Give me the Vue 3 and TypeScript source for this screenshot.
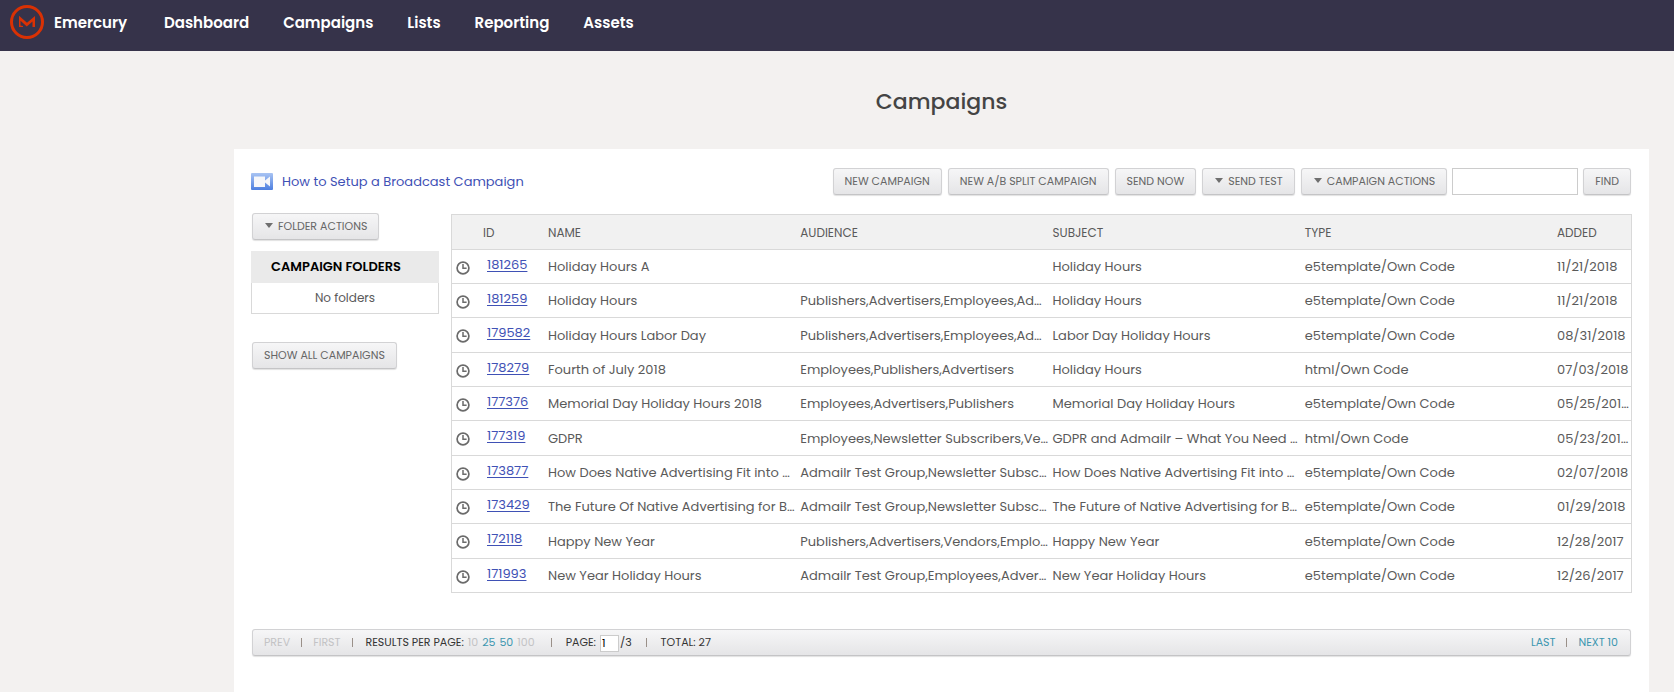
<script setup lang="ts">
import { ref } from 'vue'

interface Campaign {
  id: string
  name: string
  audience: string
  subject: string
  type: string
  added: string
}

const navItems: string[] = ['Dashboard', 'Campaigns', 'Lists', 'Reporting', 'Assets']

const search = ref('')
const page = ref('1')

const campaigns: Campaign[] = [
  { id: '181265', name: 'Holiday Hours A', audience: '', subject: 'Holiday Hours', type: 'e5template/Own Code', added: '11/21/2018' },
  { id: '181259', name: 'Holiday Hours', audience: 'Publishers,Advertisers,Employees,Ad…', subject: 'Holiday Hours', type: 'e5template/Own Code', added: '11/21/2018' },
  { id: '179582', name: 'Holiday Hours Labor Day', audience: 'Publishers,Advertisers,Employees,Ad…', subject: 'Labor Day Holiday Hours', type: 'e5template/Own Code', added: '08/31/2018' },
  { id: '178279', name: 'Fourth of July 2018', audience: 'Employees,Publishers,Advertisers', subject: 'Holiday Hours', type: 'html/Own Code', added: '07/03/2018' },
  { id: '177376', name: 'Memorial Day Holiday Hours 2018', audience: 'Employees,Advertisers,Publishers', subject: 'Memorial Day Holiday Hours', type: 'e5template/Own Code', added: '05/25/201…' },
  { id: '177319', name: 'GDPR', audience: 'Employees,Newsletter Subscribers,Ve…', subject: 'GDPR and Admailr – What You Need …', type: 'html/Own Code', added: '05/23/201…' },
  { id: '173877', name: 'How Does Native Advertising Fit into …', audience: 'Admailr Test Group,Newsletter Subsc…', subject: 'How Does Native Advertising Fit into …', type: 'e5template/Own Code', added: '02/07/2018' },
  { id: '173429', name: 'The Future Of Native Advertising for B…', audience: 'Admailr Test Group,Newsletter Subsc…', subject: 'The Future of Native Advertising for B…', type: 'e5template/Own Code', added: '01/29/2018' },
  { id: '172118', name: 'Happy New Year', audience: 'Publishers,Advertisers,Vendors,Emplo…', subject: 'Happy New Year', type: 'e5template/Own Code', added: '12/28/2017' },
  { id: '171993', name: 'New Year Holiday Hours', audience: 'Admailr Test Group,Employees,Adver…', subject: 'New Year Holiday Hours', type: 'e5template/Own Code', added: '12/26/2017' },
]
</script>

<template>
  <div class="page">
    <header class="topbar">
      <a class="brand" href="#">
        <svg class="brand-logo" viewBox="0 0 34 34" aria-hidden="true">
          <circle cx="17" cy="17" r="15.5" fill="none" stroke="#d93104" stroke-width="3" />
          <path d="M9 10.700l8 7 8-6.700v11h-2.500v-5.500L16.800 21.500l-6.300-5.700v4.700l2.500.500v1H9z" fill="#d93104" />
        </svg>
        <span>Emercury</span>
      </a>
      <nav class="nav">
        <a v-for="item in navItems" :key="item" href="#">{{ item }}</a>
      </nav>
    </header>

    <main class="main">
      <h1>Campaigns</h1>
      <section class="panel">
        <div class="toolbar">
          <a class="howto" href="#">
            <svg class="camera" viewBox="0 0 22 17" aria-hidden="true">
              <defs>
                <linearGradient id="cameraFill" x1="0" y1="0" x2="0" y2="1">
                  <stop offset="0" stop-color="#a9c4f3" />
                  <stop offset="1" stop-color="#4d7fe0" />
                </linearGradient>
              </defs>
              <rect width="22" height="17" rx="1" fill="url(#cameraFill)" />
              <path d="M3 3.500h11v4l5-4v10l-5-4v4.500H3z" fill="#f6f7fa" />
            </svg>
            <span>How to Setup a Broadcast Campaign</span>
          </a>
          <form class="actions" @submit.prevent>
            <button type="button" class="btn">NEW CAMPAIGN</button>
            <button type="button" class="btn">NEW A/B SPLIT CAMPAIGN</button>
            <button type="button" class="btn">SEND NOW</button>
            <button type="button" class="btn"><i class="caret"></i>SEND TEST</button>
            <button type="button" class="btn"><i class="caret"></i>CAMPAIGN ACTIONS</button>
            <input v-model="search" class="search" type="text" aria-label="Find campaigns" />
            <button type="submit" class="btn">FIND</button>
          </form>
        </div>

        <div class="content">
          <aside class="side">
            <button type="button" class="btn"><i class="caret"></i>FOLDER ACTIONS</button>
            <div class="folders">
              <h2>CAMPAIGN FOLDERS</h2>
              <p>No folders</p>
            </div>
            <button type="button" class="btn">SHOW ALL CAMPAIGNS</button>
          </aside>

          <table class="grid">
            <colgroup>
              <col class="c-icon" />
              <col class="c-id" />
              <col />
              <col />
              <col />
              <col />
              <col class="c-added" />
            </colgroup>
            <thead>
              <tr>
                <th></th>
                <th class="h-id">ID</th>
                <th>NAME</th>
                <th>AUDIENCE</th>
                <th>SUBJECT</th>
                <th>TYPE</th>
                <th>ADDED</th>
              </tr>
            </thead>
            <tbody>
              <tr v-for="c in campaigns" :key="c.id">
                <td class="icon">
                  <svg viewBox="0 0 14 14" aria-hidden="true">
                    <circle cx="7" cy="7" r="5.900" fill="none" stroke="#6b6b6b" stroke-width="1.700" />
                    <path d="M7 3v4.300h3.600" fill="none" stroke="#6b6b6b" stroke-width="1.500" />
                  </svg>
                </td>
                <td class="id"><a href="#">{{ c.id }}</a></td>
                <td>{{ c.name }}</td>
                <td>{{ c.audience }}</td>
                <td>{{ c.subject }}</td>
                <td>{{ c.type }}</td>
                <td>{{ c.added }}</td>
              </tr>
            </tbody>
          </table>
        </div>

        <div class="pager">
          <div class="pager-group">
            <span class="off">PREV</span>
            <i class="bar"></i>
            <span class="off">FIRST</span>
            <i class="bar"></i>
            <span class="sizes">
              <span>RESULTS PER PAGE:</span>
              <span class="off">10</span>
              <a href="#">25</a>
              <a href="#">50</a>
              <span class="off">100</span>
            </span>
            <i class="bar wide"></i>
            <label class="page-no">PAGE: <input v-model="page" type="text" />/3</label>
            <i class="bar wide"></i>
            <span>TOTAL: 27</span>
          </div>
          <div class="pager-group">
            <a href="#">LAST</a>
            <i class="bar"></i>
            <a href="#">NEXT 10</a>
          </div>
        </div>
      </section>
    </main>
  </div>
</template>

<style>
body {
  background: #f3f1f0;
}
</style>

<style scoped>
.page {
  min-height: 100vh;
  display: flex;
  flex-direction: column;
  font-family: Poppins, Inter, "Open Sans", sans-serif;
  font-size: 13px;
  color: #5a5a5a;
}
* {
  box-sizing: border-box;
}
.topbar {
  display: flex;
  align-items: center;
  height: 51px;
  padding: 0 10px 7px;
  background: #36334a;
}
a {
  text-decoration: none;
}
.brand,
.nav a {
  color: #fff;
  font-weight: 600;
}
.brand {
  display: flex;
  align-items: center;
  gap: 10px;
  width: 154px;
  font-size: 15px;
}
.brand-logo {
  width: 34px;
  height: 34px;
}
.nav {
  display: flex;
  gap: 34px;
  padding-top: 1px;
  font-size: 15px;
}
.main {
  flex: 1;
  display: flex;
  flex-direction: column;
  margin: 0 25px 0 234px;
}
h1 {
  margin: 0;
  padding: 34px 0 30px;
  text-align: center;
  font-size: 22px;
  line-height: 34px;
  font-weight: 500;
  color: #444;
}
.panel {
  flex: 1;
  padding: 19px 17px 36px;
  background: #fff;
}
.toolbar {
  display: flex;
  justify-content: space-between;
  align-items: center;
  margin-right: 1px;
}
.howto {
  display: flex;
  align-items: center;
  gap: 9px;
  color: #3f51b5;
}
.camera {
  width: 22px;
  height: 17px;
}
.actions {
  display: flex;
  align-items: center;
  gap: 6px;
}
.btn {
  display: inline-flex;
  align-items: center;
  justify-content: center;
  height: 27px;
  padding: 0 11px;
  border: 1px solid #d2d2d4;
  border-bottom-color: #c4c4c6;
  border-radius: 3px;
  background: linear-gradient(#f6f6f7, #e5e5e7);
  box-shadow: 0 1px 1px rgba(0, 0, 0, 0.12);
  font-family: inherit;
  font-size: 11px;
  color: #666;
  white-space: nowrap;
}
.caret {
  margin: 0 5px 2px 1px;
  border: 4px solid transparent;
  border-top: 5px solid #6f6f6f;
  border-bottom: 0;
}
.search {
  width: 126px;
  height: 27px;
  margin: 0 -1px;
  padding: 0 6px;
  border: 1px solid #ccc;
  background: #fff;
  font: inherit;
}
.content {
  display: flex;
  align-items: flex-start;
  gap: 12px;
  margin-top: 18px;
}
.side {
  width: 188px;
  flex: none;
}
.side .btn {
  margin-left: 1px;
}
.folders {
  margin: 11px 0 28px;
  border: 1px solid #d9d9d9;
  border-top: 0;
}
.folders h2 {
  margin: 0 -1px;
  padding-left: 20px;
  background: #eaeaea;
  font-size: 13px;
  line-height: 32px;
  font-weight: 600;
  color: #000;
}
.folders p {
  margin: 0;
  text-align: center;
  font-size: 12px;
  line-height: 30px;
}
.grid {
  flex: 1;
  min-width: 0;
  width: 100%;
  table-layout: fixed;
  border-collapse: separate;
  border-spacing: 0;
  margin-top: 1px;
  border: 1px solid #d9d9d9;
  border-bottom: 0;
}
.c-icon {
  width: 24px;
}
.c-id {
  width: 65px;
}
.c-added {
  width: 81px;
}
th,
td {
  height: 34px;
  padding: 1px 0 0 7px;
  border-bottom: 1px solid #d9d9d9;
  text-align: left;
  font-weight: 400;
  white-space: nowrap;
}
th {
  height: 35px;
  background: #f1f1f1;
  font-size: 12px;
}
tbody tr:nth-child(3n) td {
  height: 35px;
}
td.icon {
  padding: 2px 0 0 4px;
}
td.icon svg {
  display: block;
  width: 14px;
  height: 14px;
}
td.id {
  padding: 0 0 4px 11px;
}
td.id a {
  color: #3f51b5;
  text-decoration: underline;
  text-underline-offset: 2px;
}
.pager {
  display: flex;
  align-items: center;
  justify-content: space-between;
  height: 27px;
  margin: 36px 1px 0;
  padding: 0 12px 0 11px;
  border: 1px solid #d2d2d4;
  border-bottom-color: #c4c4c6;
  border-radius: 3px;
  background: linear-gradient(#f6f6f7, #e5e5e7);
  box-shadow: 0 1px 1px rgba(0, 0, 0, 0.12);
  font-size: 11px;
  color: #333;
}
.pager a {
  color: #3d97b0;
}
.pager-group {
  display: flex;
  align-items: center;
}
.off {
  color: #c3c3c5;
}
.bar {
  width: 1px;
  height: 9px;
  margin: 0 11px 1px;
  background: #9a9089;
}
.bar.wide {
  margin: 0 14px 1px;
}
.sizes {
  display: flex;
  gap: 4px;
  padding: 0 2px;
}
.page-no {
  display: flex;
  align-items: center;
  white-space: pre;
}
.page-no input {
  width: 19px;
  height: 17px;
  margin: 2px 1px 0;
  padding: 0 1px;
  border: 1px solid #ccc;
  background: #fff;
  font: inherit;
  color: #000;
}
</style>
